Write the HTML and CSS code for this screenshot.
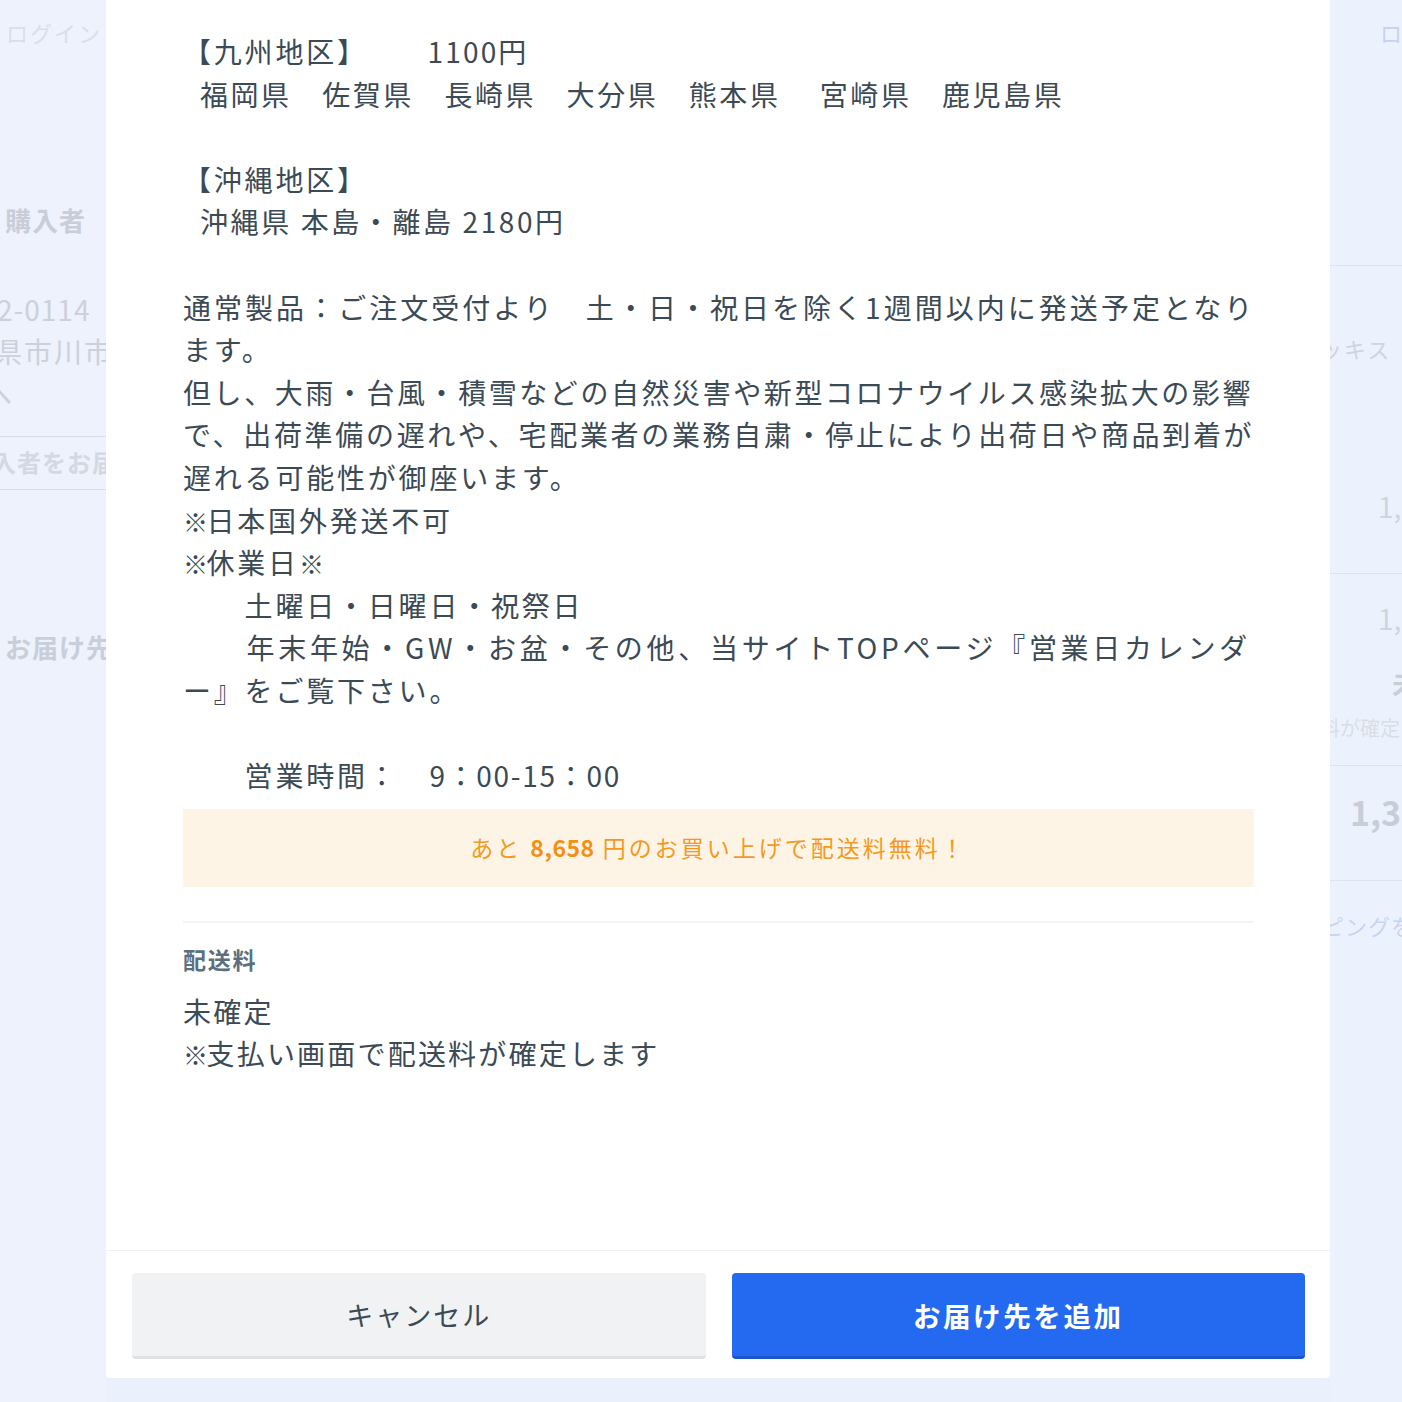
FILE: index.html
```html
<!DOCTYPE html>
<html lang="ja">
<head>
<meta charset="utf-8">
<title>お届け先を追加</title>
<link rel="stylesheet" href="styles.css">
</head>
<body>
<div class="page">
  <aside class="bg-left">
    <div class="bl-login">ログイン</div>
    <div class="bl-buyer">購入者</div>
    <div class="bl-zip">2-0114</div>
    <div class="bl-addr">県市川市</div>
    <div class="bl-he">へ</div>
    <div class="bl-rule r1"></div>
    <div class="bl-link">入者をお届</div>
    <div class="bl-rule r2"></div>
    <div class="bl-deliv">お届け先</div>
  </aside>
  <div class="bg-mid"></div>
  <aside class="bg-right">
    <div class="br-logout">ロ</div>
    <div class="br-rule q1"></div>
    <div class="br-item">ッキス</div>
    <div class="br-num n1">1,</div>
    <div class="br-rule q2"></div>
    <div class="br-num n2">1,</div>
    <div class="br-bold">未</div>
    <div class="br-note">料が確定</div>
    <div class="br-rule q3"></div>
    <div class="br-total">1,3</div>
    <div class="br-rule q4"></div>
    <div class="br-blue">ピングを</div>
  </aside>
</div>

<div class="modal">
  <div class="modal-body">
    <div class="info">
      <div class="line">【九州地区】　　<span class="price">1100円</span></div>
      <div class="line ind prefs">福岡県　佐賀県　長崎県　大分県　熊本県　 宮崎県　鹿児島県</div>
      <div class="line blank"></div>
      <div class="line">【沖縄地区】</div>
      <div class="line ind okinawa">沖縄県 本島・離島 2180円</div>
      <div class="line blank"></div>
      <div class="line l1">通常製品：ご注文受付より　土・日・祝日を除く1週間以内に発送予定となり</div>
      <div class="line">ます。</div>
      <div class="line l3">但し、大雨・台風・積雪などの自然災害や新型コロナウイルス感染拡大の影響</div>
      <div class="line l4">で、出荷準備の遅れや、宅配業者の業務自粛・停止により出荷日や商品到着が</div>
      <div class="line">遅れる可能性が御座います。</div>
      <div class="line"><span class="k">※</span>日本国外発送不可</div>
      <div class="line"><span class="k">※</span>休業日<span class="k">※</span></div>
      <div class="line">　　土曜日・日曜日・祝祭日</div>
      <div class="line l-cal">　　年末年始・GW・お盆・その他、当サイトTOPページ『営業日カレンダ</div>
      <div class="line">ー』をご覧下さい。</div>
      <div class="line blank"></div>
      <div class="line">　　営業時間：　<span class="hours">9：00-15：00</span></div>
    </div>

    <div class="notice">あと <strong>8,658</strong> 円のお買い上げで配送料無料！</div>

    <hr class="divider">

    <section class="fee">
      <h3 class="fee-title">配送料</h3>
      <p class="fee-value">未確定</p>
      <p class="fee-note"><span class="k">※</span>支払い画面で配送料が確定します</p>
    </section>
  </div>

  <div class="modal-footer">
    <button class="btn btn-cancel" type="button">キャンセル</button>
    <button class="btn btn-primary" type="button">お届け先を追加</button>
  </div>
</div>
</body>
</html>
```

FILE: styles.css
```css
* { box-sizing: border-box; }

html, body {
  margin: 0;
  padding: 0;
  height: 100%;
}

body {
  background: #ebf1fc;
  font-family: "Noto Sans CJK JP", "Noto Sans", sans-serif;
  color: #3b4a55;
  overflow: hidden;
}

/* ---------- dimmed page behind the modal ---------- */
.page {
  display: flex;
  height: 1402px;
}

.bg-left {
  width: 106px;
  flex: none;
  overflow: hidden;
  white-space: nowrap;
  display: flex;
  flex-direction: column;
  color: #cdd3dc;
  background: #edf2fc;
}

.bg-mid { flex: 1; }

.bg-right {
  width: 72px;
  flex: none;
  overflow: hidden;
  white-space: nowrap;
  display: flex;
  flex-direction: column;
  color: #cdd3dc;
  background: #ecf2fd;
}

.bl-login { margin-top: 17px; font-size: 22px; line-height: 30px; padding-left: 6px; letter-spacing: 2px; color: #d9dfe8; }
.bl-buyer { margin-top: 155px; font-size: 26px; line-height: 36px; font-weight: 700; padding-left: 5px; letter-spacing: 1px; color: #c8ced7; }
.bl-zip { margin-top: 50px; font-size: 28px; line-height: 42px; margin-left: -3px; letter-spacing: 1px; color: #cbd1da; }
.bl-addr { font-size: 28px; line-height: 42px; margin-left: -6px; letter-spacing: 2px; color: #cbd1da; }
.bl-he { font-size: 28px; line-height: 42px; margin-left: -16px; color: #cbd1da; }
.bl-rule { height: 1px; background: #d8dee8; flex: none; }
.bl-rule.r1 { margin-top: 22px; }
.bl-link { margin-top: 8px; font-size: 24px; line-height: 34px; font-weight: 700; margin-left: -8px; letter-spacing: 1px; color: #d3d9e2; }
.bl-rule.r2 { margin-top: 10px; }
.bl-deliv { margin-top: 139px; font-size: 26px; line-height: 36px; font-weight: 700; padding-left: 5px; letter-spacing: 1px; color: #c9cfd8; }

.br-logout { margin-top: 17px; font-size: 22px; line-height: 30px; padding-left: 50px; color: #c6d3f1; }
.br-rule { height: 1px; background: #dde3ed; flex: none; }
.br-rule.q1 { margin-top: 218px; }
.br-item { margin-top: 67px; font-size: 22px; line-height: 30px; margin-left: -10px; letter-spacing: 2px; color: #cfd5dd; }
.br-num { font-size: 28px; line-height: 40px; padding-left: 48px; color: #cfd5dd; }
.br-num.n1 { margin-top: 123px; }
.br-rule.q2 { margin-top: 47px; }
.br-num.n2 { margin-top: 24px; }
.br-bold { margin-top: 25px; font-size: 28px; line-height: 40px; font-weight: 700; padding-left: 62px; color: #c9cfd8; }
.br-note { margin-top: 11px; font-size: 20px; line-height: 28px; margin-left: -10px; color: #d9dee6; }
.br-rule.q3 { margin-top: 23px; }
.br-total { margin-top: 23px; font-size: 34px; line-height: 46px; font-weight: 700; padding-left: 20px; color: #c8ced7; }
.br-rule.q4 { margin-top: 45px; }
.br-blue { margin-top: 29px; font-size: 22px; line-height: 30px; margin-left: -8px; letter-spacing: 1px; color: #c8d5f2; }

/* ---------- modal ---------- */
.modal {
  position: fixed;
  top: 0;
  left: 106px;
  width: 1224px;
  height: 1378px;
  background: #ffffff;
  display: flex;
  flex-direction: column;
  border-radius: 0 0 4px 4px;
}

.modal-body {
  flex: 1;
  padding: 30px 76px 0 77px;
}

.info {
  font-size: 28px;
  line-height: 42.6px;
  letter-spacing: 2.8px;
  white-space: nowrap;
  color: #3b4a55;
}

.line { height: 42.6px; }
.line.ind { padding-left: 17px; }
.prefs { letter-spacing: 2.55px; }
.price { margin-left: 12px; letter-spacing: 2.2px; }
.okinawa { letter-spacing: 2.6px; }
.l1 { letter-spacing: 3.03px; }
.l3 { letter-spacing: 2.57px; }
.l4 { letter-spacing: 2.68px; }
.l-cal { letter-spacing: 3.72px; }
.hours { letter-spacing: 1.7px; }

.k {
  font-size: 25px;
  letter-spacing: -2.5px;
  font-weight: 700;
  margin-right: 1px;
}

.notice {
  margin-top: 12px;
  height: 78px;
  background: #fef4e6;
  color: #f39a1e;
  font-size: 23px;
  letter-spacing: 3px;
  display: flex;
  align-items: center;
  justify-content: center;
  white-space: pre;
  padding-bottom: 2px;
}

.notice strong {
  font-weight: 700;
  color: #f39014;
  letter-spacing: 0.5px;
}

.divider {
  margin: 34px 0 0;
  border: 0;
  height: 2px;
  background: #f1f3f5;
}

.fee { margin: 0; }

.fee-title {
  margin: 20px 0 0;
  font-size: 23px;
  line-height: 32px;
  font-weight: 700;
  color: #5c6f7e;
  letter-spacing: 1.8px;
}

.fee-value,
.fee-note {
  margin: 0;
  font-size: 28px;
  line-height: 42.6px;
  letter-spacing: 2.2px;
  color: #3b4a55;
}

.fee-value { margin-top: 15px; }

.modal-footer {
  border-top: 1px solid #eef0f3;
  padding: 22px 25px 19px 26px;
  display: grid;
  grid-template-columns: 1fr 1fr;
  column-gap: 26px;
}

.btn {
  height: 86px;
  border: 0;
  border-radius: 4px;
  font-family: "Noto Sans CJK JP", "Noto Sans", sans-serif;
  font-size: 27px;
  letter-spacing: 2px;
  cursor: pointer;
}

.btn-cancel {
  background: #f1f2f4;
  color: #3b4a55;
  border-bottom: 3px solid #dfe1e5;
}

.btn-primary {
  background: #236af1;
  color: #ffffff;
  font-weight: 700;
  font-size: 27.5px;
  letter-spacing: 2.6px;
  border-bottom: 3px solid #1b56cc;
}
```
